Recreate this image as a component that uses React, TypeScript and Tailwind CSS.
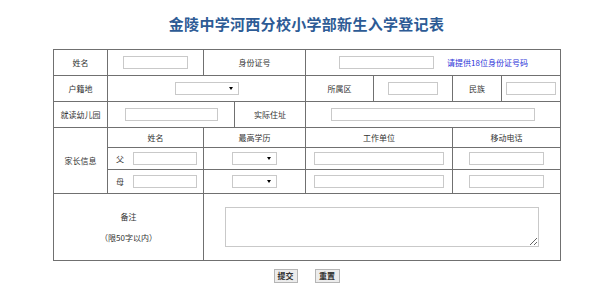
import React from "react";

const F = { fontFamily: '"Noto Sans CJK SC", "Liberation Sans", sans-serif' };

function Box({ w, className = "" }: { w: number; className?: string }) {
  return (
    <div
      className={"h-[13px] border border-[#c9c9c9] bg-white " + className}
      style={{ width: w }}
    />
  );
}

function Sel({ w }: { w: number }) {
  return (
    <div
      className="h-[13px] border border-[#c9c9c9] bg-white flex items-center justify-end pr-[5px]"
      style={{ width: w }}
    >
      <div className="w-0 h-0 border-l-[2px] border-r-[2px] border-t-[3px] border-l-transparent border-r-transparent border-t-black" />
    </div>
  );
}

const td = "border border-[#707070] p-0 align-middle text-center";

export default function App() {
  return (
    <div className="w-[600px] h-[306px] bg-white text-[#333] text-[8px]" style={F}>
      <div className="ml-[53px] w-[507px]">
        <div className="h-[49px] flex items-center justify-center pb-[1px]">
          <div className="text-[15px] font-bold text-[#2d5b95] leading-[18px] whitespace-nowrap tracking-[0.3px]">
            金陵中学河西分校小学部新生入学登记表
          </div>
        </div>
        <table className="w-[507px] table-fixed border-collapse border border-[#808080]">
          <colgroup>
            <col style={{ width: 54 }} />
            <col style={{ width: 96 }} />
            <col style={{ width: 31 }} />
            <col style={{ width: 71 }} />
            <col style={{ width: 68 }} />
            <col style={{ width: 79 }} />
            <col style={{ width: 49 }} />
            <col style={{ width: 59 }} />
          </colgroup>
          <tbody>
            <tr className="h-[26px]">
              <td className={td}>姓名</td>
              <td className={td}>
                <div className="flex justify-center"><Box w={65} /></div>
              </td>
              <td className={td} colSpan={2}>身份证号</td>
              <td className={td} colSpan={4}>
                <div className="flex items-center pl-[33px]">
                  <Box w={95} />
                  <span className="ml-[13px] text-[#2a32d8]">请提供18位身份证号码</span>
                </div>
              </td>
            </tr>
            <tr className="h-[26px]">
              <td className={td}>户籍地</td>
              <td className={td} colSpan={3}>
                <div className="flex justify-center"><Sel w={64} /></div>
              </td>
              <td className={td}>所属区</td>
              <td className={td}>
                <div className="flex justify-center"><Box w={50} /></div>
              </td>
              <td className={td}>民族</td>
              <td className={td}>
                <div className="flex justify-center"><Box w={50} /></div>
              </td>
            </tr>
            <tr className="h-[26px]">
              <td className={td}>就读幼儿园</td>
              <td className={td} colSpan={2}>
                <div className="flex justify-center"><Box w={93} /></div>
              </td>
              <td className={td}>实际住址</td>
              <td className={td} colSpan={4}>
                <div className="flex pl-[25px]"><Box w={204} /></div>
              </td>
            </tr>
            <tr className="h-[20px]">
              <td className={td} rowSpan={3}>家长信息</td>
              <td className={td}>姓名</td>
              <td className={td} colSpan={2}>最高学历</td>
              <td className={td} colSpan={2}>工作单位</td>
              <td className={td} colSpan={2}>移动电话</td>
            </tr>
            <tr className="h-[22px]">
              <td className={td}>
                <div className="flex items-center pl-[8px]">
                  <span>父</span>
                  <Box w={64} className="ml-[9px]" />
                </div>
              </td>
              <td className={td} colSpan={2}>
                <div className="flex justify-center"><Sel w={45} /></div>
              </td>
              <td className={td} colSpan={2}>
                <div className="flex justify-center"><Box w={130} /></div>
              </td>
              <td className={td} colSpan={2}>
                <div className="flex justify-center"><Box w={75} /></div>
              </td>
            </tr>
            <tr className="h-[24px]">
              <td className={td}>
                <div className="flex items-center pl-[8px]">
                  <span>母</span>
                  <Box w={64} className="ml-[9px]" />
                </div>
              </td>
              <td className={td} colSpan={2}>
                <div className="flex justify-center"><Sel w={45} /></div>
              </td>
              <td className={td} colSpan={2}>
                <div className="flex justify-center"><Box w={130} /></div>
              </td>
              <td className={td} colSpan={2}>
                <div className="flex justify-center"><Box w={75} /></div>
              </td>
            </tr>
            <tr className="h-[67px]">
              <td className={td} colSpan={2}>
                <div className="flex flex-col items-center gap-[9px]">
                  <span>备注</span>
                  <span>（限50字以内）</span>
                </div>
              </td>
              <td className={td} colSpan={6}>
                <div className="flex pl-[21px]">
                  <textarea
                    className="w-[314px] h-[40px] border border-[#c9c9c9] bg-white outline-none"
                    readOnly
                  />
                </div>
              </td>
            </tr>
          </tbody>
        </table>
        <div className="flex justify-center gap-[17px] mt-[8px]">
          <button className="w-[24px] h-[14px] border border-[#b5b5b5] bg-[#ececec] text-[8px] font-bold text-[#333] leading-none flex items-center justify-center">
            提交
          </button>
          <button className="w-[25px] h-[14px] border border-[#b5b5b5] bg-[#ececec] text-[8px] font-bold text-[#333] leading-none flex items-center justify-center">
            重置
          </button>
        </div>
      </div>
    </div>
  );
}
